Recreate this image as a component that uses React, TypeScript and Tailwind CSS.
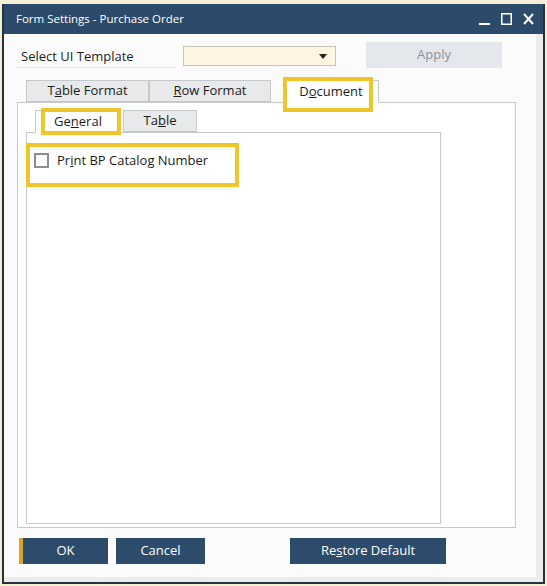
import React from "react";

const font = { fontFamily: '"Open Sans", "Noto Sans", "Liberation Sans", sans-serif' };

function Tab({ active, w, children }: { active?: boolean; w: number; children: React.ReactNode }) {
  return (
    <div
      style={{ width: w }}
      className={
        "h-[22px] flex items-center justify-center border border-[#c6c9cc] text-[13px] text-[#1c1c1c] " +
        (active ? "bg-white border-b-white relative z-10 -mb-px h-[23px]" : "bg-[#e7e9eb]")
      }
    >
      {children}
    </div>
  );
}

export default function App() {
  return (
    <div style={font} className="relative w-[547px] h-[586px] overflow-hidden bg-[#f3eed6] pt-[4px] pl-[2px]">
      {/* window */}
      <div className="w-[543px] h-[580px] flex flex-col border-x-2 border-b-2 border-[#26323e] bg-[#ececec]">
        {/* title bar */}
        <div className="h-[30px] bg-[#2c4a69] flex items-center pl-[12px] pr-[9px] text-white">
          <span className="text-[11.5px]">Form Settings - Purchase Order</span>
          <div className="ml-auto flex items-center gap-[11px]">
            <svg width="11" height="12" viewBox="0 0 11 12">
              <rect x="0" y="10" width="11" height="2" fill="#fff" />
            </svg>
            <svg width="11" height="12" viewBox="0 0 11 12">
              <rect x="0.75" y="0.75" width="9.5" height="10.5" fill="none" stroke="#fff" strokeWidth="1.5" />
            </svg>
            <svg width="11" height="12" viewBox="0 0 11 12">
              <path d="M1 1 L10 11 M10 1 L1 11" stroke="#fff" strokeWidth="2" />
            </svg>
          </div>
        </div>

        {/* body */}
        <div className="flex-1 mr-[7px] mb-[5px] bg-[#fbfbfb] flex flex-col">
          {/* template row */}
          <div className="mt-[8px] flex items-center h-[26px]">
            <div className="ml-[12px] w-[160px] h-[22px] flex items-center pl-[5px] border-b border-[#e1e3e5] text-[13px] text-[#1c1c1c] mt-[4px]">
              Select UI Template
            </div>
            <div className="ml-[7px] w-[153px] h-[20px] bg-[#fdf4e1] border border-[#c9c3b6] flex items-center justify-end pr-[8px] mt-[2px]">
              <svg width="8" height="5" viewBox="0 0 8 5">
                <path d="M0 0 L8 0 L4 5 Z" fill="#222" />
              </svg>
            </div>
            <div className="ml-[30px] w-[136px] h-[26px] bg-[#e4e8ed] flex items-center justify-center text-[13px] text-[#8b939c]">
              Apply
            </div>
          </div>

          {/* outer tabs */}
          <div className="mt-[12px] ml-[13px] w-[499px] relative">
            <div className="flex items-end pl-[9px]">
              <Tab w={123}>
                T<u>a</u>ble Format
              </Tab>
              <Tab w={122}>
                <u>R</u>ow Format
              </Tab>
              <div className="w-[12px]" />
              <Tab w={96} active>
                D<u>o</u>cument
              </Tab>
            </div>
            <div className="h-[426px] border border-[#c6c9cc] bg-white pt-[7px] pl-[8px]">
              {/* inner tabs */}
              <div className="flex items-end pl-[9px]">
                <Tab w={86} active>
                  Ge<u>n</u>eral
                </Tab>
                <div className="w-[2px]" />
                <Tab w={74}>
                  Ta<u>b</u>le
                </Tab>
              </div>
              <div className="w-[415px] h-[392px] border border-[#c6c9cc] bg-white pt-[18px] pl-[7px]">
                <div className="flex items-center gap-[8px]">
                  <div className="w-[15px] h-[15px] border-2 border-[#8e8e8e] bg-white" />
                  <span className="text-[13px] text-[#1c1c1c]">
                    Pr<u>i</u>nt BP Catalog Number
                  </span>
                </div>
              </div>
            </div>

            {/* annotation boxes */}
            <div className="absolute z-20 left-[266px] top-[-3px] w-[90px] h-[35px] border-[4px] border-[#f0c52a]" />
            <div className="absolute z-20 left-[24px] top-[28px] w-[80px] h-[27px] border-[4px] border-[#f0c52a]" />
            <div className="absolute z-20 left-[9px] top-[63px] w-[213px] h-[44px] border-[4px] border-[#f0c52a]" />
          </div>

          {/* buttons */}
          <div className="mt-[10px] ml-[15px] flex h-[26px] text-[13px] text-white">
            <div className="w-[89px] bg-[#2d4c6b] border-l-4 border-[#d9a624] flex items-center justify-center">OK</div>
            <div className="ml-[8px] w-[89px] bg-[#2d4c6b] flex items-center justify-center">Cancel</div>
            <div className="ml-[85px] w-[156px] bg-[#2d4c6b] flex items-center justify-center">
              Re<u>s</u>tore Default
            </div>
          </div>
        </div>
      </div>
    </div>
  );
}
